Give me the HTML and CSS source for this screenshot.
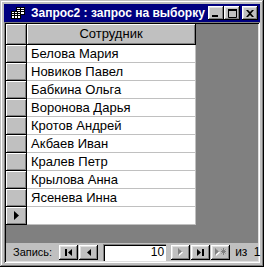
FILE: index.html
```html
<!DOCTYPE html>
<html lang="ru">
<head>
    <meta charset="UTF-8">
    <title>Запрос2 : запрос на выборку</title>
    <link rel="stylesheet" href="styles.css">
</head>
<body>
    <div class="window">
        <div class="titlebar">
            <svg class="app-icon" width="16" height="16" viewBox="0 0 16 16">
                <rect x="6.5" y="2.5" width="8" height="7" fill="#fff" stroke="#000"/>
                <path d="M6.5 4.5h8M6.5 6.5h8M10.5 2.5v7" stroke="#000"/>
                <rect x="1.5" y="6.5" width="9" height="7" fill="#fff" stroke="#000"/>
                <path d="M1.5 8.5h9M1.5 10.5h9M4.5 6.5v7M7.5 6.5v7" stroke="#000"/>
            </svg>
            <span class="title">Запрос2 : запрос на выборку</span>
            <div class="title-buttons">
                <span class="tbtn"><svg width="8" height="7" viewBox="0 0 8 7"><rect x="0" y="5" width="6" height="2" fill="#000"/></svg></span>
                <span class="tbtn"><svg width="9" height="9" viewBox="0 0 9 9"><path d="M0.5 0.5h8v8h-8z" fill="none" stroke="#000"/><rect x="0" y="0" width="9" height="2" fill="#000"/></svg></span>
                <span class="tbtn close"><svg width="8" height="7" viewBox="0 0 8 7"><path d="M0 0h2l2 2 2-2h2l-3 3.5 3 3.5h-2l-2-2-2 2h-2l3-3.5z" fill="#000"/></svg></span>
            </div>
        </div>
        <div class="sheet">
            <div class="grid">
                <div class="row head"><div class="sel"></div><div class="cell">Сотрудник</div></div>
                <div class="row"><div class="sel"></div><div class="cell">Белова Мария</div></div>
                <div class="row"><div class="sel"></div><div class="cell">Новиков Павел</div></div>
                <div class="row"><div class="sel"></div><div class="cell">Бабкина Ольга</div></div>
                <div class="row"><div class="sel"></div><div class="cell">Воронова Дарья</div></div>
                <div class="row"><div class="sel"></div><div class="cell">Кротов Андрей</div></div>
                <div class="row"><div class="sel"></div><div class="cell">Акбаев Иван</div></div>
                <div class="row"><div class="sel"></div><div class="cell">Кралев Петр</div></div>
                <div class="row"><div class="sel"></div><div class="cell">Крылова Анна</div></div>
                <div class="row"><div class="sel"></div><div class="cell">Ясенева Инна</div></div>
                <div class="row new">
                    <div class="sel"><svg width="5" height="9" viewBox="0 0 5 9"><path d="M0 0l5 4.5-5 4.5z" fill="#000"/></svg></div>
                    <div class="cell"></div>
                </div>
            </div>
            <div class="navbar">
                <span class="nav-label">Запись:</span>
                <span class="nbtn first"><svg width="8" height="7" viewBox="0 0 8 7"><rect x="0" y="0" width="2" height="7"/><path d="M7 0v7L3 3.5z"/></svg></span>
                <span class="nbtn"><svg width="4" height="7" viewBox="0 0 4 7"><path d="M4 0v7L0 3.5z"/></svg></span>
                <span class="record">10</span>
                <span class="nbtn off"><svg width="5" height="8" viewBox="0 0 5 8"><path d="M1 1v7l4-3.5z" fill="#fff"/><path d="M0 0v7l4-3.5z" fill="#808080"/></svg></span>
                <span class="nbtn"><svg width="8" height="7" viewBox="0 0 8 7"><path d="M0 0v7l4-3.5z"/><rect x="5" y="0" width="2" height="7"/></svg></span>
                <span class="nbtn off"><svg width="12" height="8" viewBox="0 0 12 8"><path d="M1 1v7l4-3.5z" fill="#fff"/><path d="M0 0v7l4-3.5z" fill="#808080"/><path d="M8.5 0v7M6 3.5h5M6.5 1.5l4 4M10.5 1.5l-4 4" stroke="#808080"/></svg></span>
                <span class="nav-total">из 1</span>
            </div>
        </div>
    </div>
</body>
</html>
```

FILE: styles.css
```css
body {
    margin: 0;
    font-family: "Liberation Sans", Arial, sans-serif;
    background: #c0c0c0;
}
.window {
    width: 264px;
    height: 267px;
    box-sizing: border-box;
    padding: 4px;
    display: flex;
    flex-direction: column;
    background: #c0c0c0;
    box-shadow: inset -1px -1px #000, inset 1px 1px #c0c0c0, inset -2px -2px #808080, inset 2px 2px #fff;
    overflow: hidden;
}
.titlebar {
    height: 18px;
    flex: none;
    display: flex;
    align-items: center;
    background: #000080;
    color: #fff;
}
.app-icon {
    margin-left: 6px;
    flex: none;
}
.title {
    margin-left: 5px;
    font-size: 12px;
    font-weight: bold;
    white-space: nowrap;
    flex: 1;
}
.title-buttons {
    display: flex;
    margin-right: 2px;
}
.tbtn {
    width: 16px;
    height: 14px;
    box-sizing: border-box;
    display: flex;
    align-items: center;
    justify-content: center;
    background: #c0c0c0;
    box-shadow: inset -1px -1px #000, inset 1px 1px #fff, inset -2px -2px #808080, inset 2px 2px #dfdfdf;
}
.tbtn.close {
    margin-left: 2px;
}
.sheet {
    flex: 1;
    display: flex;
    flex-direction: column;
    padding: 2px;
    box-shadow: inset 1px 1px #808080, inset -1px -1px #fff, inset 2px 2px #000, inset -2px -2px #dfdfdf;
}
.grid {
    flex: 1;
    background: #808080;
}
.row {
    display: flex;
    height: 18px;
}
.row.head {
    height: 21px;
}
.sel {
    width: 21px;
    box-sizing: border-box;
    display: flex;
    align-items: center;
    justify-content: center;
    background: #c0c0c0;
    border-right: 1px solid #000;
    border-bottom: 1px solid #000;
    box-shadow: inset 1px 1px #fff, inset -1px -1px #808080;
}
.cell {
    width: 169px;
    box-sizing: border-box;
    padding-left: 4px;
    font-size: 13px;
    line-height: 17px;
    background: #fff;
    color: #000;
    border-right: 1px solid #c0c0c0;
    border-bottom: 1px solid #c0c0c0;
    white-space: nowrap;
}
.head .cell {
    padding-left: 0;
    text-align: center;
    line-height: 20px;
    background: #c0c0c0;
    border-right-color: #000;
    border-bottom-color: #000;
    box-shadow: inset 1px 1px #fff, inset -1px -1px #808080;
}
.navbar {
    height: 18px;
    flex: none;
    display: flex;
    align-items: center;
    font-size: 11px;
    color: #000;
    white-space: nowrap;
}
.nav-label {
    margin-left: 7px;
    margin-right: 7px;
}
.nbtn {
    width: 19px;
    height: 15px;
    box-sizing: border-box;
    display: flex;
    align-items: center;
    justify-content: center;
    margin-right: 1px;
    background: #c0c0c0;
    box-shadow: inset -1px -1px #000, inset 1px 1px #fff, inset -2px -2px #808080, inset 2px 2px #dfdfdf;
    flex: none;
}
.record {
    width: 63px;
    height: 17px;
    box-sizing: border-box;
    margin: 0 5px 0 4px;
    padding-right: 2px;
    text-align: right;
    font-size: 12px;
    line-height: 17px;
    background: #fff;
    box-shadow: inset 1px 1px #808080, inset 2px 2px #000;
    flex: none;
}
.nav-total {
    margin-left: 4px;
    font-size: 12px;
    word-spacing: 3px;
}
```
